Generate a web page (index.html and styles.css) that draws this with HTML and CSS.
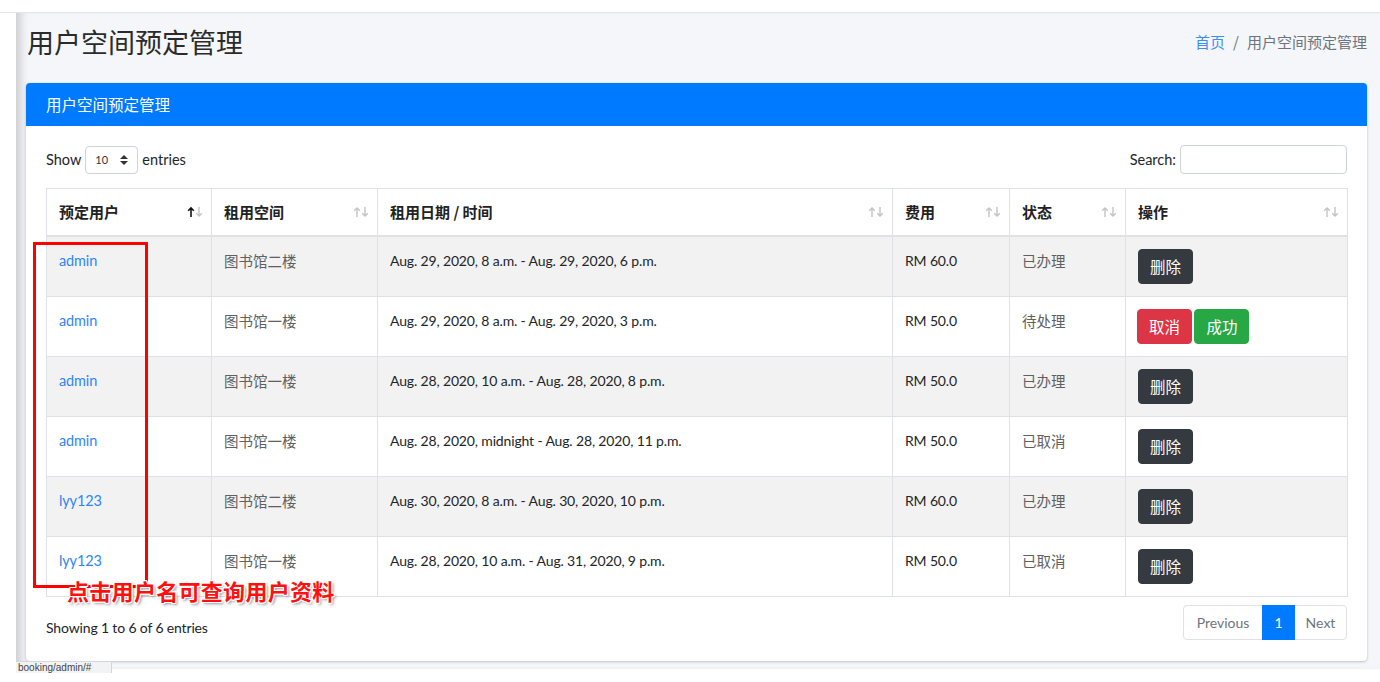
FILE: index.html
```html
<!DOCTYPE html>
<html lang="zh">
<head>
<meta charset="utf-8">
<title>用户空间预定管理</title>
<link rel="stylesheet" href="styles.css">
</head>
<body>
<div class="topbar"></div>
<div class="wrapper">
  <div class="content-header">
    <h1 class="page-title">用户空间预定管理</h1>
    <ol class="breadcrumb">
      <li><a class="bc-link" href="#">首页</a></li>
      <li class="bc-sep">/</li>
      <li class="bc-cur">用户空间预定管理</li>
    </ol>
  </div>
  <div class="card">
    <div class="card-header">用户空间预定管理</div>
    <div class="card-body">
      <div class="dt-top">
        <div class="dt-length">Show
          <span class="dt-select">10
            <svg class="sel-icon" width="8" height="10" viewBox="0 0 8 10"><path d="M4 0 L8 4 H0 Z M0 6 H8 L4 10 Z" fill="#333"/></svg>
          </span>
          entries</div>
        <div class="dt-search">Search: <span class="dt-input"></span></div>
      </div>
      <table class="dt-table">
        <colgroup>
          <col class="c1"><col class="c2"><col class="c3"><col class="c4"><col class="c5"><col class="c6">
        </colgroup>
        <thead>
          <tr>
            <th><div class="th-in"><span>预定用户</span><svg class="sort" width="16" height="12" viewBox="0 0 16 12"><path d="M4 11 V2 M1.2 4.8 L4 2 L6.8 4.8" stroke="#111" stroke-width="1.6" fill="none"/><path d="M12 1 V10 M9.2 7.2 L12 10 L14.8 7.2" stroke="#c4c4c4" stroke-width="1.4" fill="none"/></svg></div></th>
            <th><div class="th-in"><span>租用空间</span><svg class="sort" width="16" height="12" viewBox="0 0 16 12"><path d="M4 11 V2 M1.2 4.8 L4 2 L6.8 4.8" stroke="#c4c4c4" stroke-width="1.4" fill="none"/><path d="M12 1 V10 M9.2 7.2 L12 10 L14.8 7.2" stroke="#c4c4c4" stroke-width="1.4" fill="none"/></svg></div></th>
            <th><div class="th-in"><span>租用日期 / 时间</span><svg class="sort" width="16" height="12" viewBox="0 0 16 12"><path d="M4 11 V2 M1.2 4.8 L4 2 L6.8 4.8" stroke="#c4c4c4" stroke-width="1.4" fill="none"/><path d="M12 1 V10 M9.2 7.2 L12 10 L14.8 7.2" stroke="#c4c4c4" stroke-width="1.4" fill="none"/></svg></div></th>
            <th><div class="th-in"><span>费用</span><svg class="sort" width="16" height="12" viewBox="0 0 16 12"><path d="M4 11 V2 M1.2 4.8 L4 2 L6.8 4.8" stroke="#c4c4c4" stroke-width="1.4" fill="none"/><path d="M12 1 V10 M9.2 7.2 L12 10 L14.8 7.2" stroke="#c4c4c4" stroke-width="1.4" fill="none"/></svg></div></th>
            <th><div class="th-in"><span>状态</span><svg class="sort" width="16" height="12" viewBox="0 0 16 12"><path d="M4 11 V2 M1.2 4.8 L4 2 L6.8 4.8" stroke="#c4c4c4" stroke-width="1.4" fill="none"/><path d="M12 1 V10 M9.2 7.2 L12 10 L14.8 7.2" stroke="#c4c4c4" stroke-width="1.4" fill="none"/></svg></div></th>
            <th><div class="th-in"><span>操作</span><svg class="sort" width="16" height="12" viewBox="0 0 16 12"><path d="M4 11 V2 M1.2 4.8 L4 2 L6.8 4.8" stroke="#c4c4c4" stroke-width="1.4" fill="none"/><path d="M12 1 V10 M9.2 7.2 L12 10 L14.8 7.2" stroke="#c4c4c4" stroke-width="1.4" fill="none"/></svg></div></th>
          </tr>
        </thead>
        <tbody>
          <tr class="odd">
            <td><a class="user" href="#">admin</a></td>
            <td class="cjk">图书馆二楼</td>
            <td>Aug. 29, 2020, 8 a.m. - Aug. 29, 2020, 6 p.m.</td>
            <td>RM 60.0</td>
            <td class="cjk">已办理</td>
            <td><span class="btn btn-dark">删除</span></td>
          </tr>
          <tr>
            <td><a class="user" href="#">admin</a></td>
            <td class="cjk">图书馆一楼</td>
            <td>Aug. 29, 2020, 8 a.m. - Aug. 29, 2020, 3 p.m.</td>
            <td>RM 50.0</td>
            <td class="cjk">待处理</td>
            <td><span class="btn btn-red">取消</span> <span class="btn btn-green">成功</span></td>
          </tr>
          <tr class="odd">
            <td><a class="user" href="#">admin</a></td>
            <td class="cjk">图书馆一楼</td>
            <td>Aug. 28, 2020, 10 a.m. - Aug. 28, 2020, 8 p.m.</td>
            <td>RM 50.0</td>
            <td class="cjk">已办理</td>
            <td><span class="btn btn-dark">删除</span></td>
          </tr>
          <tr>
            <td><a class="user" href="#">admin</a></td>
            <td class="cjk">图书馆一楼</td>
            <td>Aug. 28, 2020, midnight - Aug. 28, 2020, 11 p.m.</td>
            <td>RM 50.0</td>
            <td class="cjk">已取消</td>
            <td><span class="btn btn-dark">删除</span></td>
          </tr>
          <tr class="odd">
            <td><a class="user" href="#">lyy123</a></td>
            <td class="cjk">图书馆二楼</td>
            <td>Aug. 30, 2020, 8 a.m. - Aug. 30, 2020, 10 p.m.</td>
            <td>RM 60.0</td>
            <td class="cjk">已办理</td>
            <td><span class="btn btn-dark">删除</span></td>
          </tr>
          <tr>
            <td><a class="user" href="#">lyy123</a></td>
            <td class="cjk">图书馆一楼</td>
            <td>Aug. 28, 2020, 10 a.m. - Aug. 31, 2020, 9 p.m.</td>
            <td>RM 50.0</td>
            <td class="cjk">已取消</td>
            <td><span class="btn btn-dark">删除</span></td>
          </tr>
        </tbody>
      </table>
      <div class="dt-bottom">
        <div class="dt-info">Showing 1 to 6 of 6 entries</div>
        <ul class="pagination">
          <li class="page-link pl-prev">Previous</li>
          <li class="page-link pl-num active">1</li>
          <li class="page-link pl-next">Next</li>
        </ul>
      </div>
    </div>
  </div>
</div>
<div class="annot-box"></div>
<div class="annot-text">点击用户名可查询用户资料</div>
<div class="statusbar">booking/admin/#</div>
</body>
</html>
```

FILE: styles.css
```css
* { box-sizing: border-box; }
html, body {
  margin: 0;
  padding: 0;
  background: #fff;
  font-family: Lato, "Noto Sans CJK SC", sans-serif;
  color: #212529;
  overflow: hidden;
}
.topbar {
  height: 13px;
  background: #fff;
  border-bottom: 1px solid #e3e5e8;
}
.wrapper {
  margin-left: 16px;
  height: 656px;
  background: #f4f6f9;
  padding: 0 13px 0 10px;
  box-shadow: inset 10px 0 8px -5px rgba(0, 0, 0, 0.16);
}
.content-header {
  height: 70px;
  display: flex;
  align-items: flex-start;
  justify-content: space-between;
  padding-top: 12px;
}
.page-title {
  margin: 0 0 0 1px;
  font-size: 27px;
  line-height: 34px;
  font-weight: 400;
  color: #2b2b2b;
  font-family: "Noto Sans CJK SC", sans-serif;
}
.breadcrumb {
  list-style: none;
  margin: 5px 0 0 0;
  padding: 0;
  display: flex;
  font-size: 15px;
  line-height: 24px;
  font-family: "Noto Sans CJK SC", sans-serif;
}
.bc-link { color: #3d8ef8; text-decoration: none; }
.bc-sep { color: #6c757d; padding: 0 8px; }
.bc-cur { color: #6c757d; }
.card {
  background: #fff;
  border-radius: 4px;
  box-shadow: 0 0 1px rgba(0, 0, 0, 0.13), 0 1px 3px rgba(0, 0, 0, 0.2);
  height: 578px;
}
.card-header {
  background: #007bff;
  color: #fff;
  height: 43px;
  padding: 0 20px;
  line-height: 43px;
  font-size: 15.5px;
  border-radius: 4px 4px 0 0;
  font-family: "Noto Sans CJK SC", sans-serif;
}
.card-body {
  padding: 19px 20px 20px;
}
.dt-top {
  display: flex;
  justify-content: space-between;
  align-items: center;
  height: 29px;
  margin-bottom: 14px;
  font-size: 14.5px;
}
.dt-length, .dt-search {
  display: flex;
  align-items: center;
  gap: 4px;
}
.dt-select {
  display: inline-flex;
  align-items: center;
  justify-content: space-between;
  width: 53px;
  height: 28px;
  border: 1px solid #ced4da;
  border-radius: 4px;
  padding: 0 9px 0 9px;
  font-size: 11px;
  color: #333;
  background: #fff;
}
.dt-input {
  display: inline-block;
  width: 167px;
  height: 29px;
  border: 1px solid #ced4da;
  border-radius: 4px;
  background: #fff;
}
.dt-table {
  width: 100%;
  border-collapse: collapse;
  table-layout: fixed;
  font-size: 14px;
  letter-spacing: -0.15px;
}
.c1 { width: 165px; }
.c2 { width: 166px; }
.c3 { width: 515px; }
.c4 { width: 117px; }
.c5 { width: 116px; }
.c6 { width: 222px; }
.dt-table th, .dt-table td {
  border: 1px solid #dee2e6;
  padding: 12px;
  vertical-align: top;
  text-align: left;
}
.dt-table th {
  border-bottom: 2px solid #dee2e6;
  padding: 12px 8px 12px 12px;
  line-height: 22px;
  font-size: 15px;
  font-weight: 700;
  letter-spacing: 0;
  font-family: "Noto Sans CJK SC", sans-serif;
  color: #222;
}
.th-in {
  display: flex;
  justify-content: space-between;
  align-items: center;
}
.sort { display: block; }
.dt-table td {
  line-height: 24px;
}
.dt-table tr.odd td {
  background: #f2f2f2;
}
.cjk {
  font-family: "Noto Sans CJK SC", sans-serif;
  color: #606060;
  font-size: 14.5px;
  letter-spacing: 0;
}
.user {
  color: #2f86f6;
  text-decoration: none;
  font-size: 14.5px;
}
.btn {
  display: inline-block;
  height: 35px;
  line-height: 33px;
  padding: 0 11px;
  border-radius: 4px;
  border: 1px solid transparent;
  color: #fff;
  font-size: 15.5px;
  letter-spacing: 0;
  font-family: "Noto Sans CJK SC", sans-serif;
  vertical-align: top;
}
.btn-dark { background: #343a40; border-color: #343a40; }
.btn-red { background: #dc3545; border-color: #dc3545; margin-left: -1px; }
.btn-green { background: #28a745; border-color: #28a745; margin-left: -1px; }
.dt-bottom {
  display: flex;
  justify-content: space-between;
  align-items: flex-start;
  margin-top: 8px;
}
.dt-info {
  font-size: 14px;
  letter-spacing: -0.15px;
  line-height: 21px;
  padding-top: 12px;
  color: #212529;
}
.pagination {
  display: flex;
  list-style: none;
  margin: 0;
  padding: 0;
  font-size: 14px;
}
.page-link {
  height: 35px;
  line-height: 33px;
  text-align: center;
  border: 1px solid #dee2e6;
  margin-left: -1px;
  color: #6c757d;
  background: #fff;
}
.pl-prev { width: 80px; border-radius: 4px 0 0 4px; margin-left: 0; }
.pl-num { width: 33px; }
.pl-next { width: 53px; border-radius: 0 4px 4px 0; }
.page-link.active {
  background: #007bff;
  border-color: #007bff;
  color: #fff;
  position: relative;
}
.annot-box {
  position: absolute;
  left: 33px;
  top: 242px;
  width: 115px;
  height: 346px;
  border: 3px solid #ff0000;
}
.annot-text {
  position: absolute;
  left: 67px;
  top: 575px;
  font-family: "Noto Sans CJK SC", sans-serif;
  font-size: 22px;
  font-weight: 700;
  line-height: 30px;
  color: #ff1010;
  letter-spacing: 0.3px;
  text-shadow:
    1px 0 0 #fff, -1px 0 0 #fff, 0 1px 0 #fff, 0 -1px 0 #fff,
    1px 1px 0 #fff, -1px -1px 0 #fff, 1px -1px 0 #fff, -1px 1px 0 #fff,
    2px 2px 3px rgba(0, 0, 0, 0.45);
}
.statusbar {
  position: absolute;
  left: 16px;
  top: 661px;
  width: 96px;
  height: 12px;
  overflow: hidden;
  background: #f1f3f4;
  border: 1px solid #d5d7da;
  border-left: none;
  border-bottom: none;
  font-size: 10px;
  line-height: 11px;
  color: #444;
  padding-left: 2px;
  font-family: "Liberation Sans", sans-serif;
}
```
